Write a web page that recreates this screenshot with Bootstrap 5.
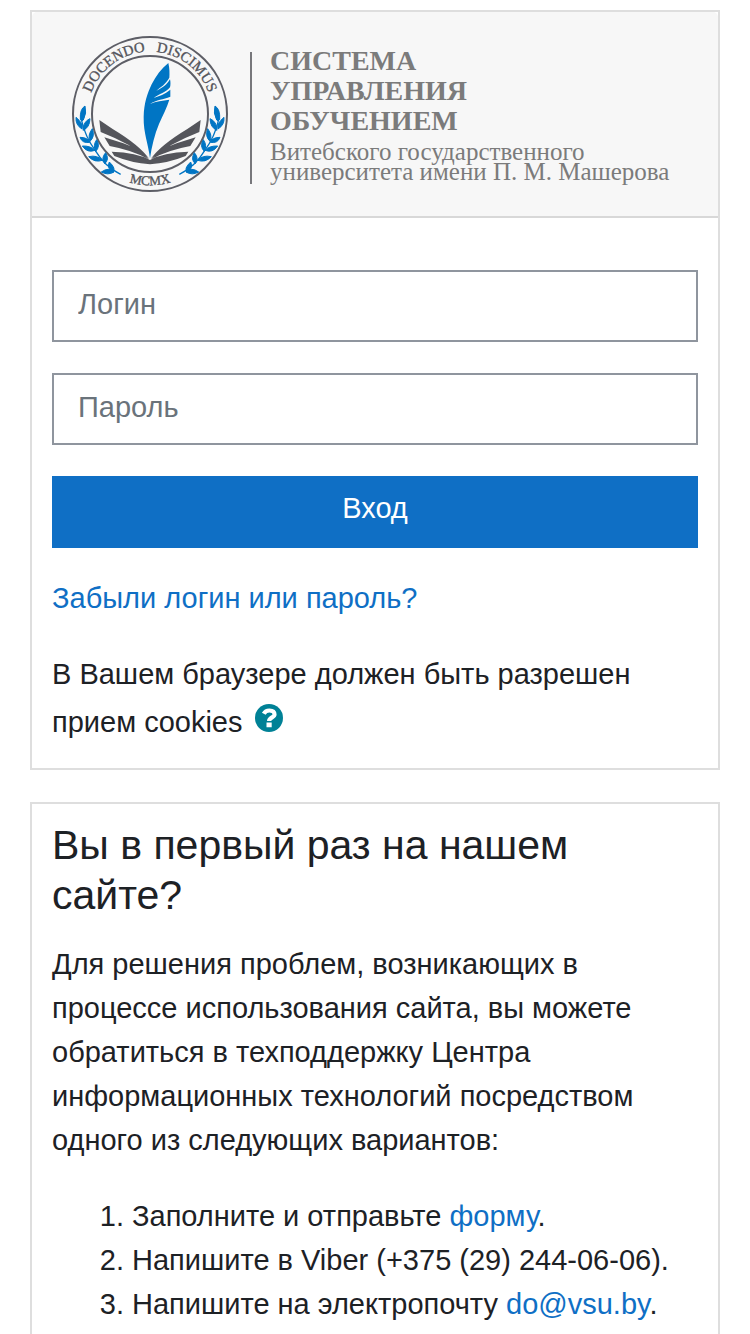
<!DOCTYPE html>
<html lang="ru">
<head>
<meta charset="utf-8">
<meta name="viewport" content="width=device-width, initial-scale=1">
<title>Система управления обучением ВГУ: Вход</title>
<link href="https://cdn.jsdelivr.net/npm/bootstrap@5.3.0/dist/css/bootstrap.min.css" rel="stylesheet">
<style>
  body { font-family: "Liberation Sans", Arial, sans-serif; font-size: 29px; line-height: 44px; color: #1d2125; }
  a { color: #0f6fc5; text-decoration: none; }
  a:hover { text-decoration: underline; }
  .login-page { padding: 10px 30px 0; gap: 32px; }
  .panel { border: 2px solid #dedede; border-radius: 0; color: inherit; }
  .panel-head { background: #f7f7f7; border-bottom: 2px solid #d8d8d8; border-radius: 0; padding: 24px 40px; }
  .crest { width: 156px; height: 156px; }
  .brand-line { width: 2px; height: 132px; background: #77777b; margin: 8px 18px 0 22px; }
  .brand { font-family: "Liberation Serif", "Times New Roman", serif; color: #7b7b7b; }
  .brand-title { font-size: 28px; line-height: 30px; font-weight: 700; margin: 0 0 6px; }
  .brand-sub { font-size: 25px; line-height: 20px; margin: 0; }
  .panel-body { padding: 52px 20px 22px; }
  .login-form { gap: 31px; margin-bottom: 28px; }
  .field, .btn-login { height: 72px; border-radius: 0; font-size: 29px; line-height: 44px; }
  .field { border: 2px solid #8f959e; padding: 8px 24px 12px; }
  .field::placeholder { color: #6a737b; }
  .btn-login { background: #0f6fc5; color: #fff; border: 0; padding: 8px 24px 16px; }
  .btn-login:hover { background: #0c589c; color: #fff; }
  .cookie-note { margin: 30px 0 0; line-height: 48px; }
  .help { width: 28px; height: 28px; margin-left: 4px; }
  .help svg { display: block; }
  .info-body { padding: 16px 20px 20px; }
  .info-title { font-size: 41px; line-height: 50px; font-weight: 400; margin-bottom: 22px; }
  .info-text { margin-bottom: 32px; }
  .info-list { padding-left: 80px; margin: 0; }
</style>
</head>
<body>
<main class="login-page container-fluid d-flex flex-column">
  <section class="card panel">
    <header class="card-header panel-head d-flex align-items-center">
      <svg class="crest flex-shrink-0" viewBox="36 33 468 468" role="img" aria-label="Герб университета">
        <defs>
          <path id="arcTop" d="M83 267A187 187 0 0 1 457 267"/>
          <path id="arcBottom" d="M56 267A214 214 0 0 0 484 267"/>
          <g id="half">
            <path fill="#54555b" d="M118 285L158 312Q238 360 268 402Q216 358 122 321ZM133 337L190 355Q240 372 266 403Q220 376 149 363ZM155 380Q230 382 270 405V418Q215 414 163 393Z"/>
            <g fill="#0075c4" stroke="#0075c4" stroke-width="3" stroke-linejoin="round">
              <path d="M75 243Q59 252 61 284Q67 290 70 285Q81 264 75 243Z"/>
              <path d="M48 277Q46 300 66 312Q72 297 48 277Z"/>
              <path d="M90 281Q69 290 69 316Q89 308 90 281Z"/>
              <path d="M60 337Q67 356 89 352Q83 337 60 337Z"/>
              <path d="M97 311Q82 330 90 349Q106 334 97 311Z"/>
              <path d="M67 363Q82 385 105 376Q92 362 67 363Z"/>
              <path d="M110 344Q98 361 107 379Q122 364 110 344Z"/>
              <path d="M86 395Q104 414 127 406Q112 389 86 395Z"/>
              <path d="M137 383Q122 399 134 416Q149 404 137 383Z"/>
              <path d="M124 441Q143 452 162 441Q146 425 124 441Z"/>
              <path d="M148 411Q139 428 158 443Q170 431 148 411Z"/>
            </g>
            <path d="M64 284Q76 336 104 374Q135 426 182 448" fill="none" stroke="#0075c4" stroke-width="4"/>
          </g>
        </defs>
        <circle cx="270" cy="267" r="231" fill="none" stroke="#5d5e66" stroke-width="6"/>
        <circle cx="270" cy="267" r="174" fill="none" stroke="#5d5e66" stroke-width="6"/>
        <use href="#half"/>
        <use href="#half" transform="translate(540 0) scale(-1 1)"/>
        <path fill="#0075c4" d="M325 114C329 130 329 146 328 158C317 178 302 186 289 197C306 190 322 178 330 163C332 171 332 180 330 187C318 202 298 207 281 219C298 213 314 208 331 194V215C310 224 290 223 270 237C289 228 307 227 328 224C321 247 309 270 297 297C284 328 275 365 270 400C265 355 250 325 251 275C252 235 262 205 275 178C288 152 304 131 325 114Z"/>
        <g font-family="Liberation Serif, serif" font-size="44" fill="#54555b" stroke="#54555b" stroke-width="1" text-anchor="middle">
          <text><textPath href="#arcTop" startOffset="50%">DOCENDO&#160;&#160; DISCIMUS</textPath></text>
          <text font-size="40"><textPath href="#arcBottom" startOffset="50%">MCMX</textPath></text>
        </g>
      </svg>
      <div class="brand-line flex-shrink-0"></div>
      <div class="brand">
        <h1 class="brand-title">СИСТЕМА<br>УПРАВЛЕНИЯ<br>ОБУЧЕНИЕМ</h1>
        <p class="brand-sub">Витебского государственного<br>университета имени П. М. Машерова</p>
      </div>
    </header>
    <div class="card-body panel-body">
      <form class="login-form d-flex flex-column">
        <label class="visually-hidden" for="username">Логин</label>
        <input class="form-control field" type="text" id="username" placeholder="Логин" autocomplete="username">
        <label class="visually-hidden" for="password">Пароль</label>
        <input class="form-control field" type="password" id="password" placeholder="Пароль" autocomplete="current-password">
        <button class="btn btn-login w-100" type="submit">Вход</button>
      </form>
      <a class="d-block" href="#forgot">Забыли логин или пароль?</a>
      <p class="cookie-note">В Вашем браузере должен быть разрешен прием cookies
        <button class="help btn p-0 border-0 align-baseline" type="button" aria-label="Справка: cookies">
          <svg viewBox="0 0 28 28" width="28" height="28" aria-hidden="true">
            <circle cx="14" cy="14" r="14" fill="#008196"/>
            <path d="M8.800 9.800Q10.500 6.500 14.400 6.500C17.500 6.500 19.500 8 19.500 10.500C19.500 13.500 14.300 13.300 14.100 17" fill="none" stroke="#fff" stroke-width="4.200"/>
            <path d="M11.500 18.500h5.200v4.700h-5.200z" fill="#fff"/>
          </svg>
        </button>
      </p>
    </div>
  </section>
  <section class="card panel">
    <div class="card-body info-body">
      <h2 class="info-title">Вы в первый раз на нашем сайте?</h2>
      <p class="info-text">Для решения проблем, возникающих в процессе использования сайта, вы можете обратиться в техподдержку Центра информационных технологий посредством одного из следующих вариантов:</p>
      <ol class="info-list">
        <li>Заполните и отправьте <a href="#form">форму</a>.</li>
        <li>Напишите в Viber (+375 (29) 244-06-06).</li>
        <li>Напишите на электропочту <a href="mailto:do@vsu.by">do@vsu.by</a>.</li>
      </ol>
    </div>
  </section>
</main>
<script src="https://cdn.jsdelivr.net/npm/bootstrap@5.3.0/dist/js/bootstrap.bundle.min.js"></script>
</body>
</html>
